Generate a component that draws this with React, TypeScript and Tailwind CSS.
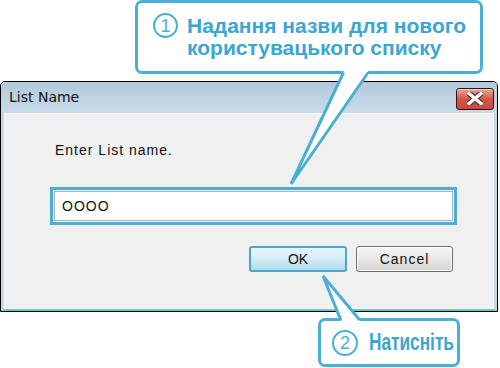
import React from "react";

const blue = "#4aafd5";

function Circled({ n, size }: { n: string; size: number }) {
  return (
    <span
      className="flex shrink-0 items-center justify-center rounded-full border-2 border-[#4aafd5] text-[18px] font-normal leading-none text-[#4aafd5]"
      style={{ width: size, height: size }}
    >
      {n}
    </span>
  );
}

function CloseButton() {
  return (
    <div className="flex h-[22px] w-[38px] items-center justify-center rounded-[3px] border border-[#3a1010] bg-gradient-to-b from-[#eba597] via-[#d3574a] to-[#c8493c] shadow-[inset_0_1px_0_rgba(255,255,255,0.5)]">
      <svg width="16" height="13" viewBox="0 0 16 13">
        <path d="M2 1.5 L14 11.5 M14 1.5 L2 11.5" stroke="#5b3b3b" strokeWidth="6" strokeLinecap="square" />
        <path d="M2 1.5 L14 11.5 M14 1.5 L2 11.5" stroke="#ffffff" strokeWidth="3.4" strokeLinecap="square" />
      </svg>
    </div>
  );
}

export default function App() {
  return (
    <div className="relative h-[368px] w-[500px] overflow-hidden bg-white font-['Liberation_Sans',Arial,sans-serif]">
      {/* callout 1 */}
      <div className="ml-[135px] flex h-[74px] w-[348px] items-start rounded-[7px] border-[3px] border-[#4aafd5] bg-white pl-[15px] pt-[12px]">
        <div className="-mt-[2px]">
          <Circled n="1" size={25} />
        </div>
        <p className="ml-[9px] text-[21px] font-bold leading-[22px] text-[#3ba6d2]">
          Надання назви для нового
          <br />
          користувацького списку
        </p>
      </div>

      {/* dialog */}
      <div className="mt-[7px] flex h-[231px] w-[498px] flex-col rounded-t-[5px] border border-black bg-[#c3d7e7]">
        <div className="flex h-[31px] items-center justify-between rounded-t-[4px] bg-gradient-to-b from-[#b2c9dc] to-[#c9dbea] pl-[8px] pr-[3px]">
          <span className="font-['DejaVu_Sans',sans-serif] text-[14px] text-[#111]">List Name</span>
          <div className="mt-[2px]">
            <CloseButton />
          </div>
        </div>
        <div className="flex-1 border-x-[3px] border-b-[2px] border-x-[#c3d7e7] border-b-[#6cc8cb]">
          <div className="h-full border border-[#fafafa] bg-[#f0f0f0] text-[14px] tracking-[1px] text-[#111]">
            <p className="ml-[50px] mt-[28px] leading-[16px]">Enter List name.</p>
            <div className="ml-[45px] mt-[29px] h-[38px] w-[407px] border-[3px] border-[#4aafd5] p-[1px]">
              <div className="flex h-full items-center border border-[#a7b6c4] bg-white pl-[7px] leading-none">OOOO</div>
            </div>
            <div className="ml-[244px] mt-[21px] flex gap-[9px]">
              <div className="flex h-[26px] w-[98px] items-center justify-center rounded-[3px] border-2 border-[#4ca6cc] bg-gradient-to-b from-[#eaf6fc] via-[#d3edf8] to-[#b3daea] tracking-[0px]">
                OK
              </div>
              <div className="flex h-[26px] w-[97px] items-center justify-center rounded-[3px] border border-[#707070] bg-gradient-to-b from-[#f5f5f5] via-[#e8e8e8] to-[#d4d4d4] shadow-[inset_0_0_0_1px_#fcfcfc]">
                Cancel
              </div>
            </div>
          </div>
        </div>
      </div>

      {/* callout 2 */}
      <div className="ml-[318px] mt-[6px] flex h-[49px] w-[142px] items-center rounded-[7px] border-[3px] border-[#4aafd5] bg-white pl-[11px]">
        <Circled n="2" size={26} />
        <span className="ml-[11px] inline-block origin-left scale-x-75 text-[23px] font-bold leading-none text-[#3ba6d2]">
          Натисніть
        </span>
      </div>

      {/* pointers */}
      <svg className="pointer-events-none absolute left-0 top-0" width="500" height="368" viewBox="0 0 500 368">
        <polygon points="344.7,69 369.9,69 291,184" fill="#ffffff" />
        <polyline points="343.5,72.5 291,184 368.2,72.5" fill="none" stroke={blue} strokeWidth="3" strokeLinejoin="miter" />
        <polygon points="342,322 361,322 323,276" fill="#ffffff" />
        <polyline points="340.8,320 323,276 359.7,320" fill="none" stroke={blue} strokeWidth="3" strokeLinejoin="miter" />
      </svg>
    </div>
  );
}
